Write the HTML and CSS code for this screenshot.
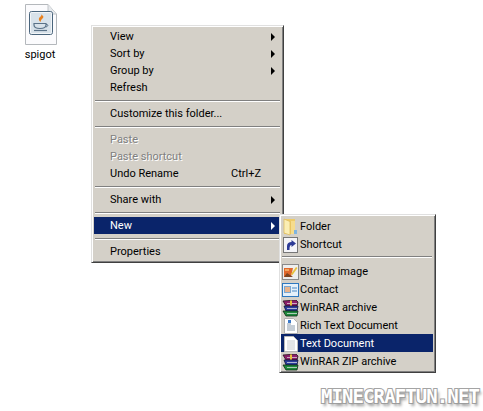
FILE: index.html
```html
<!DOCTYPE html>
<html lang="en">

<head>
    <meta charset="UTF-8">
    <meta name="viewport" content="width=device-width, initial-scale=1.0">
    <title>Context Menu</title>
    <link rel="stylesheet" href="styles.css">
</head>

<body>

    <!-- Desktop icon -->
    <div class="desktop-icon">
        <svg class="file-icon" width="32" height="41" viewBox="0 0 32 41">
            <path d="M0.500 0.500H23L31.500 10V40.500H0.500Z" fill="#fbfbfd" stroke="#b4b8bc" />
            <path d="M23 0.500V10H31.500" fill="#e6e9ec" stroke="#c0c4c8" />
            <rect x="4.500" y="7.500" width="23" height="23" rx="2" fill="#d8e2ea" stroke="#4a657c" />
            <rect x="5.500" y="8.500" width="21" height="21" rx="1" fill="none" stroke="#f2f5f8" />
            <path d="M16 10c2 2-3 3-2 6 .3 1 1 1.500 2 2-.5-1 0-2 1-3 1-1 2-2 1-3" fill="#e8801e" />
            <path d="M9 19.500h12v1.500c0 2.500-2.500 3.500-6 3.500s-6-1-6-3.500z" fill="none" stroke="#5a7288" stroke-width="1.200" />
            <path d="M21 20.500c2-.5 3 1.500 0 2.500" fill="none" stroke="#5a7288" />
            <path d="M9 26.500h13" stroke="#5a7288" stroke-width="1.200" />
        </svg>
        <span>spigot</span>
    </div>

    <!-- Context menu -->
    <div class="menu">
        <div class="item arrow">View</div>
        <div class="item arrow">Sort by</div>
        <div class="item arrow">Group by</div>
        <div class="item">Refresh</div>
        <div class="sep"></div>
        <div class="item">Customize this folder...</div>
        <div class="sep"></div>
        <div class="item disabled">Paste</div>
        <div class="item disabled">Paste shortcut</div>
        <div class="item">Undo Rename<span class="shortcut">Ctrl+Z</span></div>
        <div class="sep"></div>
        <div class="item arrow">Share with</div>
        <div class="sep"></div>
        <div class="item arrow active">New

            <div class="submenu">
                <div class="sub-item">
                    <svg width="17" height="18" viewBox="0 0 17 18">
                        <path d="M2 1h11v15H2z" fill="#eecb68" />
                        <path d="M9 3h4v13H9z" fill="#f6dc8c" />
                        <path d="M2 1l6 2.500V17l-6-2z" fill="#fbeeb4" stroke="#dcb858" stroke-width="0.700" />
                        <path d="M12 12h3v4h-3z" fill="#7fb4e0" />
                    </svg>
                    Folder
                </div>
                <div class="sub-item">
                    <svg width="17" height="16" viewBox="0 0 17 16">
                        <rect x="1.500" y="0.500" width="14" height="15" fill="#f4f4f8" stroke="#777" />
                        <path d="M5 13V9C5 6.500 7 5 9.500 5V3L14 6.500 9.500 10V8C8 8 7.500 9.500 7.500 13Z" fill="#2c3a96" />
                    </svg>
                    Shortcut
                </div>
                <div class="sep sub-sep"></div>
                <div class="sub-item">
                    <svg width="17" height="16" viewBox="0 0 17 16">
                        <rect x="0.500" y="0.500" width="16" height="15" fill="#eeeeee" stroke="#8a8a8a" />
                        <path d="M2 13V4h9l-2 9z" fill="#e0682c" />
                        <path d="M2 13l3-4 3 2 3 2z" fill="#7e4420" />
                        <path d="M9 10l5-7 1.500 1-5 7z" fill="#e8c23c" />
                        <path d="M3 5h4v2H3z" fill="#f4a860" />
                    </svg>
                    Bitmap image
                </div>
                <div class="sub-item">
                    <svg width="17" height="14" viewBox="0 0 17 14">
                        <rect x="0.500" y="0.500" width="16" height="13" fill="#e4f0fa" stroke="#2d78c0" />
                        <rect x="2.500" y="3.500" width="6" height="6" fill="#e9b48c" stroke="#7ba7cf" />
                        <path d="M10 5h5M10 8h5" stroke="#4a88c4" />
                    </svg>
                    Contact
                </div>
                <div class="sub-item">
                    <svg width="17" height="17" viewBox="0 0 17 17">
                        <path d="M1 1l13-1 2 2-1 4H4z" fill="#8c1f6a" stroke="#2a1020" stroke-width="0.800" />
                        <path d="M2 6h14l-1 5H4z" fill="#2c3c9c" stroke="#101838" stroke-width="0.800" />
                        <path d="M1 11h15l-1 5H4z" fill="#1f8a3c" stroke="#0c2c14" stroke-width="0.800" />
                        <path d="M5 3.500h10M5 8.500h10M5 13.500h10" stroke="#e8e8e8" stroke-width="0.700" />
                        <path d="M8 .5h2v5H8z" fill="#e8c23c" />
                    </svg>
                    WinRAR archive
                </div>
                <div class="sub-item">
                    <svg width="17" height="16" viewBox="0 0 17 16">
                        <path d="M2.500 0.500H11.500L15.500 4.500V15.500H2.500Z" fill="#fff" stroke="#b0b0b0" />
                        <path d="M5 6h4M5 8h8M5 10h8M5 12h8" stroke="#8a9aaa" />
                        <path d="M6 2h3v3H6z" fill="#3a78c8" />
                    </svg>
                    Rich Text Document
                </div>
                <div class="sub-item active">
                    <svg width="17" height="16" viewBox="0 0 17 16">
                        <path d="M2.500 0.500H11.500L15.500 4.500V15.500H2.500Z" fill="#fff" stroke="#b8b8b8" />
                        <path d="M5 5h8M5 7h8M5 9h8M5 11h8M5 13h8" stroke="#c4c8cc" />
                    </svg>
                    Text Document
                </div>
                <div class="sub-item">
                    <svg width="17" height="17" viewBox="0 0 17 17">
                        <path d="M1 1l13-1 2 2-1 4H4z" fill="#8c1f6a" stroke="#2a1020" stroke-width="0.800" />
                        <path d="M2 6h14l-1 5H4z" fill="#2c3c9c" stroke="#101838" stroke-width="0.800" />
                        <path d="M1 11h15l-1 5H4z" fill="#1f8a3c" stroke="#0c2c14" stroke-width="0.800" />
                        <path d="M5 3.500h10M5 8.500h10M5 13.500h10" stroke="#e8e8e8" stroke-width="0.700" />
                        <path d="M8 .5h2v5H8z" fill="#e8c23c" />
                    </svg>
                    WinRAR ZIP archive
                </div>
            </div>
        </div>
        <div class="sep"></div>
        <div class="item">Properties</div>
    </div>

    <div class="watermark">MINECRAFTUN.NET</div>

</body>

</html>
```
FILE: styles.css
```css
* {
    margin: 0;
    padding: 0;
    box-sizing: border-box;
    font-family: 'Roboto', sans-serif;
}

body {
    background-color: #fff;
    color: #000;
    font-size: 11px;
    height: 411px;
    overflow: hidden;
    position: relative;
}

.desktop-icon {
    width: 50px;
    margin: 4px 0 0 15px;
    display: flex;
    flex-direction: column;
    align-items: center;
    gap: 2px;
    line-height: 16px;
}

.file-icon {
    margin-left: 2px;
}

.menu {
    position: absolute;
    left: 91px;
    top: 25px;
    width: 193px;
    height: 238px;
    padding: 2px;
    background-color: #d4d0c8;
    border: 1px solid;
    border-color: #e0e0e0 #404040 #404040 #e0e0e0;
    box-shadow: inset 1px 1px 0 #fff, inset -1px -1px 0 #808080;
}

.item {
    position: relative;
    height: 17px;
    line-height: 17px;
    padding-left: 16px;
}

.arrow::after {
    content: "";
    position: absolute;
    right: 6px;
    top: 5px;
    border-left: 4px solid #000;
    border-top: 4px solid transparent;
    border-bottom: 4px solid transparent;
}

.item.active {
    background-color: #0a246a;
    color: #fff;
}

.item.active::after {
    border-left-color: #fff;
}

.disabled {
    color: #808080;
    text-shadow: 1px 1px 0 #fff;
}

.shortcut {
    position: absolute;
    left: 137px;
}

.sep {
    height: 2px;
    margin: 4px 1px 3px;
    background-color: #fff;
    border-top: 1px solid #808080;
}

.submenu {
    position: absolute;
    left: 185px;
    top: -3px;
    width: 157px;
    height: 159px;
    padding: 2px 2px 2px 1px;
    background-color: #d4d0c8;
    color: #000;
    border: 1px solid;
    border-color: #e0e0e0 #404040 #404040 #e0e0e0;
    box-shadow: inset 1px 1px 0 #fff, inset -1px -1px 0 #808080;
}

.sub-item {
    display: flex;
    align-items: center;
    height: 18px;
    line-height: 18px;
    padding: 2px 0 0 1px;
}

.sub-item svg {
    margin-right: 1px;
    flex-shrink: 0;
}

.sub-item.active {
    background-color: #0a246a;
    color: #fff;
}

.sub-sep {
    margin: 3px 1px 4px;
}

.watermark {
    position: absolute;
    right: 4px;
    bottom: 4px;
    font-family: 'DejaVu Sans Mono', monospace;
    font-weight: bold;
    font-size: 19px;
    letter-spacing: -0.9px;
    color: #fff;
    -webkit-text-stroke: 2px #a4a4a4;
    paint-order: stroke fill;
    text-shadow: 2px 3px 3px #999;
}
```
